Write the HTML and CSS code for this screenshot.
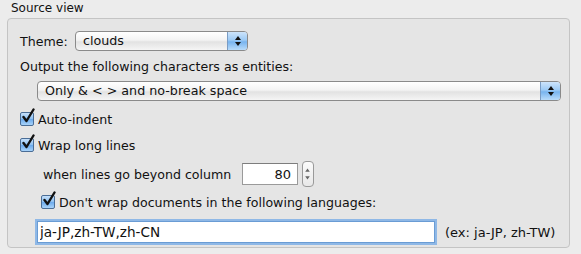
FILE: index.html
```html
<!DOCTYPE html>
<html lang="en">
<head>
  <meta charset="UTF-8">
  <title>Source view</title>
  <link rel="stylesheet" href="styles.css">
</head>
<body>

<!-- Source view preferences group -->
<div class="group-title">Source view</div>
<div class="group-box">

  <div class="row row-theme">
    <span class="label">Theme:</span>
    <div class="popup popup-theme">
      <span class="popup-value">clouds</span>
      <span class="popup-arrows">
        <svg width="8" height="12" viewBox="0 0 8 12"><path d="M4 1 L7 5 L1 5 Z M1 7 L7 7 L4 11 Z" fill="#111"/></svg>
      </span>
    </div>
  </div>

  <div class="row row-label">Output the following characters as entities:</div>

  <div class="row row-entities">
    <div class="popup popup-wide">
      <span class="popup-value">Only &amp; &lt; &gt; and no-break space</span>
      <span class="popup-arrows">
        <svg width="8" height="12" viewBox="0 0 8 12"><path d="M4 1 L7 5 L1 5 Z M1 7 L7 7 L4 11 Z" fill="#111"/></svg>
      </span>
    </div>
  </div>

  <label class="row check-row">
    <span class="checkbox">
      <svg width="16" height="17" viewBox="0 0 16 17"><path d="M3.5 9 L6.5 13 L13.5 1.5" stroke="#111" stroke-width="2.4" fill="none" stroke-linecap="round" stroke-linejoin="round"/></svg>
    </span>
    Auto-indent
  </label>

  <label class="row check-row row-wrap">
    <span class="checkbox">
      <svg width="16" height="17" viewBox="0 0 16 17"><path d="M3.5 9 L6.5 13 L13.5 1.5" stroke="#111" stroke-width="2.4" fill="none" stroke-linecap="round" stroke-linejoin="round"/></svg>
    </span>
    Wrap long lines
  </label>

  <div class="row row-column">
    <span class="label">when lines go beyond column</span>
    <input class="field field-num" type="text" value="80">
    <span class="stepper">
      <svg width="12" height="26" viewBox="0 0 12 26"><path d="M6 7 L8.5 10.5 L3.5 10.5 Z M3.5 15.5 L8.5 15.5 L6 19 Z" fill="#666"/></svg>
    </span>
  </div>

  <label class="row check-row row-nowrap">
    <span class="checkbox">
      <svg width="16" height="17" viewBox="0 0 16 17"><path d="M3.5 9 L6.5 13 L13.5 1.5" stroke="#111" stroke-width="2.4" fill="none" stroke-linecap="round" stroke-linejoin="round"/></svg>
    </span>
    Don't wrap documents in the following languages:
  </label>

  <div class="row row-langs">
    <input class="field field-langs" type="text" value="ja-JP,zh-TW,zh-CN">
    <span class="hint">(ex: ja-JP, zh-TW)</span>
  </div>

</div>
</body>
</html>
```

FILE: styles.css
```css
body {
  margin: 0;
  background-color: #ececec;
  font-family: 'DejaVu Sans', sans-serif;
  font-size: 12.6px;
  color: #111;
}

.group-title {
  height: 18px;
  line-height: 16px;
  padding-left: 11px;
  font-size: 12px;
}

.group-box {
  margin: 0 11px 0 7px;
  height: 228px;
  background-color: #e5e5e5;
  border: 1px solid #c4c4c4;
  border-radius: 4px;
  padding: 0 0 0 12px;
}

.row {
  display: flex;
  align-items: center;
}

.row-theme {
  margin-top: 12px;
  height: 20px;
}

.row-theme .label {
  width: 55px;
}

.popup {
  display: flex;
  height: 18px;
  border: 1px solid #8a8a8a;
  border-radius: 4px;
  background: linear-gradient(#ffffff, #f3f3f3 45%, #e2e2e2 55%, #f5f5f5);
  overflow: hidden;
}

.popup-theme {
  width: 171px;
}

.popup-value {
  flex: 1;
  line-height: 18px;
  padding-left: 7px;
  font-size: 12.7px;
}

.popup-arrows {
  width: 19px;
  display: flex;
  align-items: center;
  justify-content: center;
  border-left: 1px solid #7a9cc4;
  background: linear-gradient(#cde4fb, #9ccaf5 45%, #78b4ef 55%, #b9dcfb);
}

.row-label {
  margin-top: 7px;
  height: 16px;
}

.row-entities {
  margin-top: 7px;
  height: 20px;
  padding-left: 17px;
}

.popup-wide {
  width: 522px;
}

.check-row {
  height: 16px;
  margin-top: 10px;
}

.row-wrap {
  margin-top: 10px;
}

.checkbox {
  position: relative;
  width: 12px;
  height: 12px;
  margin-right: 4px;
  border: 1px solid #4a6d96;
  border-radius: 2px;
  background: linear-gradient(#c6e0fa, #8cc0f2 50%, #6aa9ec 51%, #a8d3fa);
}

.checkbox svg {
  position: absolute;
  left: -1px;
  top: -5px;
}

.row-column {
  margin-top: 10px;
  height: 22px;
  padding-left: 23px;
}

.row-column .label {
  width: 199px;
}

.field {
  font-family: 'DejaVu Sans', sans-serif;
  font-size: 13.6px;
  color: #111;
  box-sizing: border-box;
  height: 22px;
  margin: 0;
  border: 1px solid #9a9a9a;
  border-top-color: #7d7d7d;
  background-color: #fff;
  outline: none;
}

.field-num {
  width: 56px;
  text-align: right;
  padding: 0 6px 0 0;
  font-size: 13px;
}

.stepper {
  display: flex;
  margin-left: 4px;
  box-sizing: border-box;
  width: 12px;
  height: 26px;
  border: 1px solid #9a9a9a;
  border-radius: 4px;
  background: linear-gradient(#fbfbfb, #e8e8e8);
}

.stepper svg {
  margin-left: -1px;
  margin-top: -1px;
}

.row-nowrap {
  margin-top: 9px;
  padding-left: 21px;
}

.row-langs {
  margin-top: 11px;
  height: 22px;
  padding-left: 17px;
}

.field-langs {
  width: 398px;
  padding: 0 2px;
  border: 1px solid #6a9cd4;
  box-shadow: 0 0 0 2px #8fb8e6;
}

.hint {
  margin-left: 10px;
  font-size: 13px;
}
```
